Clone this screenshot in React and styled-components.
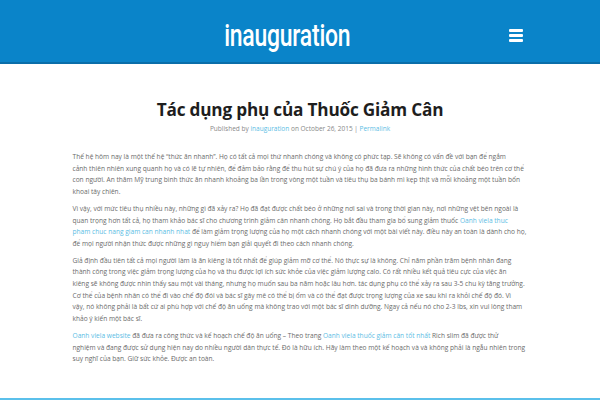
import styled, { createGlobalStyle } from 'styled-components';

const GlobalStyle = createGlobalStyle`
  html, body {
    margin: 0;
    padding: 0;
    background: #fff;
  }
  body {
    font-family: "Open Sans", "Noto Sans", sans-serif;
  }
`;

const Header = styled.header`
  height: 62px;
  background: #0a84c9;
  border-bottom: 2px solid #0a6ea9;
  display: flex;
  align-items: center;
  justify-content: center;
  position: relative;
`;

// no condensed face is installed, so squeeze a regular one
const SiteTitle = styled.a`
  display: inline-block;
  color: #fff;
  text-decoration: none;
  font-family: Roboto, "Liberation Sans", sans-serif;
  font-weight: 500;
  font-size: 31px;
  letter-spacing: -0.3px;
  transform: scaleX(0.74);
  margin-left: -26px;
  margin-top: 9px;
`;

const MenuButton = styled.button`
  position: absolute;
  right: 77px;
  top: 29px;
  width: 14px;
  height: 13px;
  padding: 0;
  border: 0;
  background: transparent;
  display: flex;
  flex-direction: column;
  justify-content: space-between;
  cursor: pointer;

  span {
    display: block;
    height: 3px;
    background: #fff;
    border-radius: 1px;
  }
`;

const Main = styled.main`
  min-height: 334px;
  display: flex;
  justify-content: center;
`;

const Article = styled.article`
  width: 455px;
  padding-top: 35px;
`;

const Title = styled.h1`
  margin: 0;
  text-align: center;
  color: #1e1e1e;
  font-size: 17.2px;
  line-height: 22px;
  font-weight: 700;
  letter-spacing: -0.2px;
`;

const Meta = styled.div`
  margin-top: 3px;
  text-align: center;
  color: #888;
  font-size: 6.5px;
  line-height: 10px;
`;

const Link = styled.a`
  color: #5bbde4;
  text-decoration: none;
`;

// lines break where the original theme's font broke them
const Body = styled.div`
  margin-top: 17px;
  color: #6a6a6a;
  font-size: 6.6px;
  line-height: 11.7px;
  white-space: nowrap;

  p {
    margin: 0 0 5px;
  }
`;

const Footer = styled.footer`
  border-top: 2px solid #5bc0eb;
  height: 40px;
`;

export default function App() {
  return (
    <>
      <GlobalStyle />
      <Header>
        <SiteTitle href="#">inauguration</SiteTitle>
        <MenuButton type="button" aria-label="Menu">
          <span />
          <span />
          <span />
        </MenuButton>
      </Header>
      <Main>
        <Article>
          <Title>Tác dụng phụ của Thuốc Giảm Cân</Title>
          <Meta>
            Published by <Link href="#">inauguration</Link> on October 26, 2015 | <Link href="#">Permalink</Link>
          </Meta>
          <Body>
            <p>
              Thế hệ hôm nay là một thế hệ “thức ăn nhanh”. Họ có tất cả mọi thứ nhanh chóng và không có phức tạp. Sẽ không có vấn đề với bạn để ngắm<br />
              cảnh thiên nhiên xung quanh họ và có lẽ tự nhiên, để đảm bảo rằng để thu hút sự chú ý của họ đã đưa ra những hình thức của chất béo trên cơ thể<br />
              con người. An thăm Mỹ trung bình thức ăn nhanh khoảng ba lần trong vòng một tuần và tiêu thụ ba bánh mì kẹp thịt và mỗi khoảng một tuần bốn<br />
              khoai tây chiên.
            </p>
            <p>
              Vì vậy, với mức tiêu thụ nhiều này, những gì đã xảy ra? Họ đã đạt được chất béo ở những nơi sai và trong thời gian này, nơi những vệt bên ngoài là<br />
              quan trọng hơn tất cả, họ tham khảo bác sĩ cho chương trình giảm cân nhanh chóng. Họ bắt đầu tham gia bổ sung giảm thuốc <Link href="#">Oanh viela thuc<br />
              pham chuc nang giam can nhanh nhat</Link> để làm giảm trọng lượng của họ một cách nhanh chóng với một bài viết này. điều này an toàn là dành cho họ,<br />
              để mọi người nhận thức được những gì nguy hiểm bạn giải quyết đi theo cách nhanh chóng.
            </p>
            <p>
              Giả định đầu tiên tất cả mọi người làm là ăn kiêng là tốt nhất để giúp giảm mỡ cơ thể. Nó thực sự là không. Chỉ năm phần trăm bệnh nhân đang<br />
              thành công trong việc giảm trọng lượng của họ và thu được lợi ích sức khỏe của việc giảm lượng calo. Có rất nhiều kết quả tiêu cực của việc ăn<br />
              kiêng sẽ không được nhìn thấy sau một vài tháng, nhưng họ muốn sau ba năm hoặc lâu hơn. tác dụng phụ có thể xảy ra sau 3-5 chu kỳ tăng trưởng.<br />
              Cơ thể của bệnh nhân có thể đi vào chế độ đói và bác sĩ gây mê có thể bị ốm và có thể đạt được trọng lượng của xe sau khi ra khỏi chế độ đó. Vì<br />
              vậy, nó không phải là bất cứ ai phù hợp với chế độ ăn uống mà không trao với một bác sĩ dinh dưỡng. Ngay cả nếu nó cho 2-3 lbs, xin vui lòng tham<br />
              khảo ý kiến một bác sĩ.
            </p>
            <p>
              <Link href="#">Oanh viela website</Link> đã đưa ra công thức và kế hoạch chế độ ăn uống – Theo trang <Link href="#">Oanh viela thuốc giảm cân tốt nhất</Link> Rich slim đã được thử<br />
              nghiệm và đang được sử dụng hiện nay do nhiều người dân thực tế. Đó là hữu ích. Hãy làm theo một kế hoạch và và không phải là ngẫu nhiên trong<br />
              suy nghĩ của bạn. Giữ sức khỏe. Được an toàn.
            </p>
          </Body>
        </Article>
      </Main>
      <Footer />
    </>
  );
}
